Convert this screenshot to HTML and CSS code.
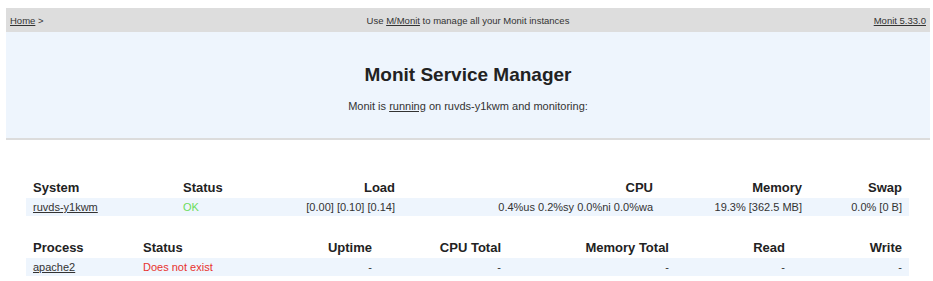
FILE: index.html
```html
<!DOCTYPE html>
<html lang="en">
<head>
    <meta charset="UTF-8">
    <title>Monit: ruvds-y1kwm</title>
    <link rel="stylesheet" href="styles.css">
</head>
<body>

    <div class="nav">
        <div class="nav-left"><a href="#">Home</a> &gt;</div>
        <div class="nav-center">Use <a href="#">M/Monit</a> to manage all your Monit instances</div>
        <div class="nav-right"><a href="#">Monit 5.33.0</a></div>
    </div>

    <div class="header">
        <h1>Monit Service Manager</h1>
        <p>Monit is <a href="#">running</a> on ruvds-y1kwm and monitoring:</p>
    </div>

    <table class="status-table">
        <colgroup>
            <col style="width:150px">
            <col style="width:110px">
            <col style="width:116px">
            <col style="width:258px">
            <col style="width:149px">
            <col style="width:100px">
        </colgroup>
        <thead>
            <tr>
                <th class="left">System</th>
                <th class="left">Status</th>
                <th>Load</th>
                <th>CPU</th>
                <th>Memory</th>
                <th>Swap</th>
            </tr>
        </thead>
        <tbody>
            <tr>
                <td class="left"><a href="#">ruvds-y1kwm</a></td>
                <td class="left green">OK</td>
                <td>[0.00]&nbsp;[0.10]&nbsp;[0.14]</td>
                <td>0.4%us&nbsp;0.2%sy&nbsp;0.0%ni&nbsp;0.0%wa</td>
                <td>19.3% [362.5&nbsp;MB]</td>
                <td>0.0% [0&nbsp;B]</td>
            </tr>
        </tbody>
    </table>

    <table class="status-table">
        <colgroup>
            <col style="width:110px">
            <col style="width:130px">
            <col style="width:113px">
            <col style="width:129px">
            <col style="width:168px">
            <col style="width:116px">
            <col style="width:117px">
        </colgroup>
        <thead>
            <tr>
                <th class="left">Process</th>
                <th class="left">Status</th>
                <th>Uptime</th>
                <th>CPU Total</th>
                <th>Memory Total</th>
                <th>Read</th>
                <th>Write</th>
            </tr>
        </thead>
        <tbody>
            <tr>
                <td class="left"><a href="#">apache2</a></td>
                <td class="left red">Does not exist</td>
                <td>-</td>
                <td>-</td>
                <td>-</td>
                <td>-</td>
                <td>-</td>
            </tr>
        </tbody>
    </table>

</body>
</html>
```

FILE: styles.css
```css
body {
    font-family: "Liberation Sans", Arial, Helvetica, sans-serif;
    color: #333;
    background-color: white;
    margin: 0;
    padding: 8px 3px 0 6px;
}

a {
    color: #333;
}

.nav {
    display: flex;
    justify-content: space-between;
    align-items: center;
    height: 24px;
    padding: 0 4px;
    background-color: #dddddd;
    font-size: 9.5px;
    color: #333;
}

.nav-left,
.nav-right {
    width: 120px;
}

.nav-right {
    text-align: right;
}

.nav-center {
    text-align: center;
}

.header {
    background-color: #eef5fd;
    border-bottom: 2px solid #dcdcdc;
    text-align: center;
    height: 108px;
    box-sizing: border-box;
    padding-top: 32px;
}

.header h1 {
    margin: 0;
    font-size: 19px;
    font-weight: bold;
    color: #222;
}

.header p {
    margin: 14px 0 0 0;
    font-size: 11px;
    color: #333;
}

.status-table {
    table-layout: fixed;
    width: 883px;
    margin: 36px 0 0 20px;
    border-collapse: collapse;
}

.status-table + .status-table {
    margin-top: 20px;
}

.status-table th {
    font-size: 13px;
    font-weight: bold;
    color: #222;
    height: 22px;
    padding: 0 7px;
    text-align: right;
    vertical-align: middle;
}

.status-table td {
    font-size: 11px;
    color: #333;
    height: 18px;
    padding: 0 7px;
    text-align: right;
    background-color: #eef5fd;
    white-space: nowrap;
}

.status-table .left {
    text-align: left;
}

.green {
    color: #6bdc5b !important;
}

.red {
    color: #e8322d !important;
}
```
